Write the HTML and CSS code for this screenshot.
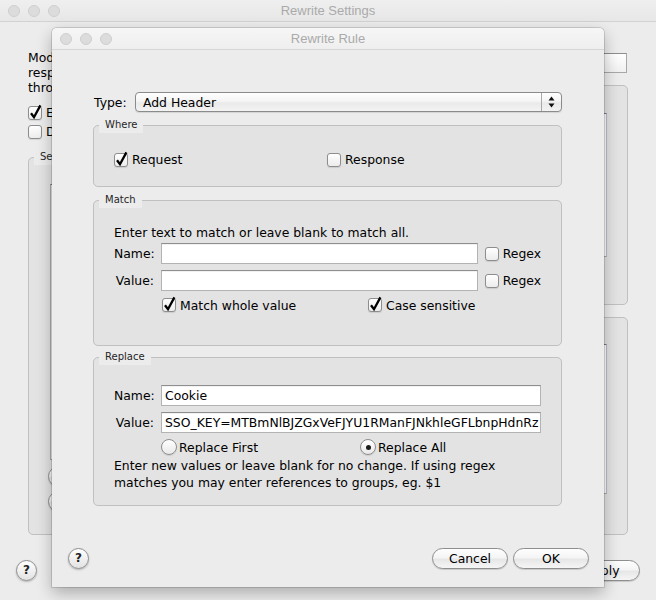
FILE: index.html
```html
<!DOCTYPE html>
<html>
<head>
<meta charset="utf-8">
<title>Rewrite Rule</title>
<link rel="stylesheet" href="styles.css">
</head>
<body>
<div class="win">
  <div class="titlebar">
    <div class="lights"><span></span><span></span><span></span></div>
    <div class="title">Rewrite Settings</div>
  </div>
  <div class="win-body">
    <div class="win-cols">
      <div class="win-left">
        <p class="intro">Modify requests and<br>responses as they pass<br>through Charles.</p>
        <div class="bg-checks">
          <label class="opt"><span class="cb"><svg viewBox="0 0 14 14"><path d="M3 7.2 L6 11.2 L12.4 -0.6"/></svg></span>Enable Rewrite</label>
          <label class="opt"><span class="cb"></span>Debug in Error Log</label>
        </div>
        <fieldset class="group sets-group">
          <legend>Sets</legend>
          <div class="group-inner sets-inner">
            <div class="list"></div>
            <div class="pill-stack"><span class="btn small-btn">Add</span><span class="btn small-btn">Remove</span></div>
          </div>
        </fieldset>
      </div>
      <div class="win-right">
        <div class="name-box"></div>
        <fieldset class="group loc-group">
          <legend>Location</legend>
          <div class="group-inner loc-inner"><div class="list list-loc"></div></div>
        </fieldset>
        <fieldset class="group rules-group">
          <legend>Rules</legend>
          <div class="group-inner rules-inner"><div class="list list-rules"></div></div>
        </fieldset>
      </div>
    </div>
    <div class="win-foot">
      <span class="help">?</span>
      <span class="btn apply">Apply</span>
    </div>
  </div>
</div>

<div class="dialog">
  <div class="titlebar dlg-titlebar">
    <div class="lights"><span></span><span></span><span></span></div>
    <div class="title">Rewrite Rule</div>
  </div>
  <div class="dlg-body">
    <div class="type-row">
      <span class="type-label">Type:</span>
      <div class="select">
        <span class="select-text">Add Header</span>
        <span class="stepper"><svg viewBox="0 0 7 12"><path d="M0.5 4.5 L3.5 0.5 L6.5 4.5Z M0.5 7.5 L3.5 11.5 L6.5 7.5Z"/></svg></span>
      </div>
    </div>

    <fieldset class="group where">
      <legend>Where</legend>
      <div class="group-inner where-inner">
        <label class="opt opt-where"><span class="cb"><svg viewBox="0 0 14 14"><path d="M3 7.2 L6 11.2 L12.4 -0.6"/></svg></span>Request</label>
        <label class="opt"><span class="cb"></span>Response</label>
      </div>
    </fieldset>

    <fieldset class="group match">
      <legend>Match</legend>
      <div class="group-inner match-inner">
        <div class="hint">Enter text to match or leave blank to match all.</div>
        <div class="form-row row-first">
          <span class="flabel">Name:</span>
          <div class="field"></div>
          <label class="opt"><span class="cb"></span>Regex</label>
        </div>
        <div class="form-row">
          <span class="flabel">Value:</span>
          <div class="field"></div>
          <label class="opt"><span class="cb"></span>Regex</label>
        </div>
        <div class="opts-row">
          <label class="opt opt-match"><span class="cb"><svg viewBox="0 0 14 14"><path d="M3 7.2 L6 11.2 L12.4 -0.6"/></svg></span>Match whole value</label>
          <label class="opt"><span class="cb"><svg viewBox="0 0 14 14"><path d="M3 7.2 L6 11.2 L12.4 -0.6"/></svg></span>Case sensitive</label>
        </div>
      </div>
    </fieldset>

    <fieldset class="group replace">
      <legend>Replace</legend>
      <div class="group-inner replace-inner">
        <div class="form-row">
          <span class="flabel">Name:</span>
          <div class="field">Cookie</div>
        </div>
        <div class="form-row">
          <span class="flabel">Value:</span>
          <div class="field">SSO_KEY=MTBmNlBJZGxVeFJYU1RManFJNkhleGFLbnpHdnRz</div>
        </div>
        <div class="opts-row radios">
          <label class="opt opt-radio opt-first"><span class="rb"></span>Replace First</label>
          <label class="opt opt-radio"><span class="rb on"></span>Replace All</label>
        </div>
        <p class="note">Enter new values or leave blank for no change. If using regex<br>matches you may enter references to groups, eg. $1</p>
      </div>
    </fieldset>
  </div>
  <div class="dlg-foot">
    <span class="help">?</span>
    <div class="btns">
      <span class="btn">Cancel</span>
      <span class="btn">OK</span>
    </div>
  </div>
</div>
</body>
</html>
```

FILE: styles.css
```css
* { box-sizing: border-box; }
html, body { margin: 0; padding: 0; }
body {
  width: 656px;
  height: 600px;
  overflow: hidden;
  position: relative;
  background: #ececec;
  font-family: "DejaVu Sans", sans-serif;
  font-size: 12.4px;
  line-height: 15px;
  color: #000;
}

/* ---------- group boxes (base) ---------- */
.group {
  margin: 0;
  padding: 0;
  min-width: 0;
  border: 1px solid #c0c0c0;
  border-radius: 5px;
  background: #e3e3e3;
}
.group legend {
  margin-left: 5px;
  padding: 0 6px;
  height: 16px;
  line-height: 16px;
  font-size: 10px;
  color: #262626;
  background: #ececec;
}

/* ---------- window chrome ---------- */
.win { height: 600px; display: flex; flex-direction: column; background: #ececec; }
.titlebar {
  flex: none;
  height: 22px;
  display: grid;
  grid-template-columns: 1fr auto 1fr;
  align-items: center;
  border-bottom: 1px solid #d2d2d2;
  background: linear-gradient(#efefef, #e7e7e7);
}
.lights { display: flex; gap: 8px; padding-left: 8px; }
.lights span {
  width: 12px; height: 12px; border-radius: 50%;
  background: #dcdcdc; border: 1px solid #cfcfcf;
}
.title {
  font-family: "Liberation Sans", sans-serif;
  font-size: 13px;
  color: #aaaaaa;
}

/* ---------- background window ---------- */
.win-body {
  flex: 1;
  display: flex;
  flex-direction: column;
  padding: 28px 28px 19px;
}
.win-cols {
  flex: 1;
  display: grid;
  grid-template-columns: 1fr 1fr;
  column-gap: 12px;
}
.win-left, .win-right { display: flex; flex-direction: column; min-width: 0; }
.intro { margin: 0; line-height: 15px; white-space: nowrap; }
.bg-checks { margin-top: 8px; display: flex; flex-direction: column; }
.bg-checks .opt { height: 19px; }
.sets-group { margin-top: 8px; flex: 1; }
.sets-inner { padding: 19px 20px 0 21px; display: flex; flex-direction: column; }
.list {
  background: #fff;
  border: 1px solid #a9a9a9;
  border-top-color: #7c7c7c;
  border-right-color: #b9bdca;
}
.sets-inner .list { height: 276px; }
.pill-stack { display: flex; flex-direction: column; gap: 4px; margin: 6px 0 0 -2px; }
.small-btn { width: 80px; }
.name-box {
  flex: none;
  height: 20px;
  margin: 3px 1px 0 0;
  border: 1px solid #a8a8a8;
  border-top-color: #8e8e8e;
  background: linear-gradient(#ffffff, #f0f0f0);
}
.loc-group { flex: none; margin-top: 4px; height: 228px; }
.loc-inner { padding: 20px 20px 0; }
.list-loc { height: 144px; }
.rules-group { margin-top: 4px; flex: 1; }
.rules-inner { padding: 19px 20px 0; }
.list-rules { height: 150px; }
.win-foot {
  margin: 25px -12px 0;
  display: flex;
  justify-content: space-between;
  align-items: center;
}
.apply { width: 58px; }

/* ---------- dialog ---------- */
.dialog {
  position: absolute;
  left: 52px;
  top: 28px;
  width: 552px;
  height: 559px;
  background: #ececec;
  border-radius: 5px 5px 0 0;
  box-shadow: 0 6px 16px rgba(0,0,0,0.28), 0 0 0 1px rgba(0,0,0,0.13);
  display: flex;
  flex-direction: column;
}
.dlg-titlebar {
  border-radius: 5px 5px 0 0;
  background: linear-gradient(#f6f6f6, #efefef);
  border-bottom-color: #d6d6d6;
}
.dlg-body {
  padding: 42px 42px 0 41px;
  display: flex;
  flex-direction: column;
}
.type-row { height: 20px; display: flex; align-items: center; }
.type-label { width: 42px; padding-left: 1px; }
.select {
  flex: 1;
  height: 20px;
  display: flex;
  align-items: center;
  border: 1px solid #8b8b8b;
  border-radius: 4px;
  background: linear-gradient(#fefefe, #f5f5f5 45%, #eaeaea 55%, #f3f3f3);
  box-shadow: 0 1px 1px rgba(0,0,0,0.1);
}
.select-text { flex: 1; padding-left: 7px; }
.stepper {
  width: 20px;
  align-self: stretch;
  border-left: 1px solid #a9a9a9;
  display: grid;
  place-items: center;
}
.stepper svg { width: 7px; height: 12px; display: block; }
.stepper path { fill: #111; }

.where { margin-top: 5px; }
.where-inner { padding: 19px 20px 19px; display: flex; }
.opt-where { width: 213px; }
.match { margin-top: 5px; }
.match-inner { padding: 17px 20px 32px; }
.replace { margin-top: 3px; }
.replace-inner { padding: 20px 20px 14px; }

.hint { height: 16px; line-height: 16px; }
.form-row { display: flex; align-items: center; height: 21px; margin-top: 6px; gap: 7px; }
.form-row.row-first { margin-top: 2px; }
.replace-inner .form-row:first-child { margin-top: 0; }
.flabel { width: 40px; text-align: right; white-space: nowrap; flex: none; }
.field {
  flex: 1;
  min-width: 0;
  height: 21px;
  background: #fff;
  border: 1px solid #b3b3b3;
  border-top-color: #8e8e8e;
  box-shadow: inset 0 1px 0 rgba(0,0,0,0.05);
  padding: 0 3px;
  line-height: 19px;
  white-space: nowrap;
  overflow: hidden;
}
.opts-row { display: flex; align-items: center; height: 16px; margin-top: 6px; padding-left: 48px; }
.opt-match { width: 206px; }
.radios { padding-left: 47px; }
.opt-first { width: 199px; }
.note { margin: 2px 0 0; line-height: 17px; white-space: nowrap; }

/* controls */
.opt { display: flex; align-items: center; gap: 4px; white-space: nowrap; flex: none; }
.opt-radio { gap: 2px; }
.cb {
  position: relative;
  flex: none;
  width: 14px;
  height: 14px;
  border: 1px solid #8d8d8d;
  border-radius: 3px;
  background: linear-gradient(#ffffff, #ececec);
  box-shadow: 0 1px 1px rgba(0,0,0,0.1);
}
.cb svg {
  position: absolute;
  left: -1px;
  top: -1px;
  width: 14px;
  height: 14px;
  overflow: visible;
}
.cb path { fill: none; stroke: #000; stroke-width: 2.3; stroke-linejoin: miter; }
.rb {
  flex: none;
  width: 16px;
  height: 16px;
  border-radius: 50%;
  border: 1px solid #8d8d8d;
  background: linear-gradient(#ffffff, #e9e9e9);
  box-shadow: 0 1px 1px rgba(0,0,0,0.1);
  display: grid;
  place-items: center;
}
.rb.on::after {
  content: "";
  width: 5px;
  height: 5px;
  border-radius: 50%;
  background: #1b1b1b;
}
.btn {
  height: 21px;
  width: 76px;
  border: 1px solid #8e8e8e;
  border-radius: 11px;
  background: linear-gradient(#fefefe, #f4f4f4 48%, #e6e6e6 52%, #f5f5f5);
  box-shadow: 0 1px 1px rgba(0,0,0,0.15);
  display: grid;
  place-items: center;
  line-height: 19px;
}
.help {
  width: 21px;
  height: 21px;
  border-radius: 50%;
  border: 1px solid #8e8e8e;
  background: linear-gradient(#ffffff, #e2e2e2);
  box-shadow: 0 1px 2px rgba(0,0,0,0.25);
  display: grid;
  place-items: center;
  font-weight: bold;
  font-size: 12px;
  color: #222;
}

.dlg-foot {
  margin-top: auto;
  padding: 0 15px 18px 16px;
  display: flex;
  justify-content: space-between;
  align-items: center;
}
.btns { display: flex; gap: 5px; }
```
